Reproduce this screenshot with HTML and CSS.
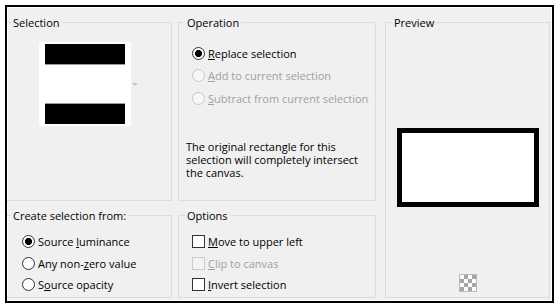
FILE: index.html
```html
<!DOCTYPE html>
<html>
<head>
<meta charset="utf-8">
<link rel="stylesheet" href="styles.css">
</head>
<body>
<div class="frame">
  <fieldset class="group left sel">
    <legend>Selection</legend>
    <div class="thumbwrap">
      <div class="thumb"><div class="bar bar-top"></div><div class="bar bar-bottom"></div></div>
      <span class="arrow"></span>
    </div>
  </fieldset>

  <fieldset class="group op">
    <legend>Operation</legend>
    <div class="list op-list">
      <div class="row"><span class="radio checked"></span><span><u>R</u>eplace selection</span></div>
      <div class="row disabled"><span class="radio"></span><span><u>A</u>dd to current selection</span></div>
      <div class="row disabled"><span class="radio"></span><span><u>S</u>ubtract from current selection</span></div>
    </div>
    <p class="note">The original rectangle for this<br>selection will completely intersect<br>the canvas.</p>
  </fieldset>

  <fieldset class="group preview">
    <legend>Preview</legend>
    <div class="preview-body">
      <div class="canvas-rect"></div>
      <div class="checker"></div>
    </div>
  </fieldset>

  <fieldset class="group left create">
    <legend>Create selection from:</legend>
    <div class="list small-list create-list">
      <div class="row"><span class="radio checked"></span><span>Source <u>l</u>uminance</span></div>
      <div class="row"><span class="radio"></span><span>Any non-<u>z</u>ero value</span></div>
      <div class="row"><span class="radio"></span><span>S<u>o</u>urce opacity</span></div>
    </div>
  </fieldset>

  <fieldset class="group options">
    <legend>Options</legend>
    <div class="list small-list opt-list">
      <div class="row"><span class="check"></span><span><u>M</u>ove to upper left</span></div>
      <div class="row disabled"><span class="check"></span><span><u>C</u>lip to canvas</span></div>
      <div class="row"><span class="check"></span><span><u>I</u>nvert selection</span></div>
    </div>
  </fieldset>
</div>
</body>
</html>
```

FILE: styles.css
```css
html, body {
  margin: 0;
  padding: 0;
  background: #ffffff;
}

body {
  font-family: "Open Sans", "Noto Sans", "Liberation Sans", sans-serif;
  font-size: 11px;
  color: #000;
}

.frame {
  margin: 5px;
  width: 545px;
  height: 294px;
  box-sizing: content-box;
  border: 2px solid #000;
  background: #f0f0f0;
  box-shadow: inset 0 0 0 1px #ffffff;
  display: grid;
  grid-template-columns: 165px 6px 198px 9px 165px;
  grid-template-rows: 186px 7px 90px;
  padding: 8px 2px 3px 0;
  box-sizing: border-box;
  width: 549px;
  height: 298px;
}

.group {
  margin: 0;
  padding: 0;
  min-width: 0;
  border: 1px solid #dcdcdc;
  box-sizing: border-box;
}

.group legend {
  margin-left: 6px;
  padding: 0 2px;
  line-height: 15px;
  height: 15px;
}

.group.left {
  border-left: none;
}

.group.left legend {
  margin-left: 4px;
}

.sel { grid-column: 1; grid-row: 1; }
.op { grid-column: 3; grid-row: 1; }
.preview { grid-column: 5; grid-row: 1 / 4; }
.create { grid-column: 1; grid-row: 3; }
.options { grid-column: 3; grid-row: 3; }

/* Selection thumbnail */
.thumbwrap {
  display: flex;
  align-items: center;
  gap: 1px;
  margin-top: 12px;
  padding-left: 32px;
}

.thumb {
  width: 92px;
  height: 84px;
  background: #ffffff;
  padding: 2px 6px;
  box-sizing: border-box;
  display: flex;
  flex-direction: column;
  justify-content: space-between;
}

.bar {
  height: 20px;
  background: #000;
}

.bar-top { box-shadow: 0 1px 0 #9a9a9a; }
.bar-bottom { box-shadow: 0 -1px 0 #9a9a9a; }

.arrow {
  width: 0;
  height: 0;
  border-left: 3px solid transparent;
  border-right: 3px solid transparent;
  border-top: 3px solid #c4c4c4;
}

/* Lists of radios / checkboxes */
.list {
  display: flex;
  flex-direction: column;
}

.op-list {
  padding: 12px 0 0 13px;
}

.op-list .row {
  height: 22.5px;
}

.small-list {
  padding-top: 8px;
}

.small-list .row {
  height: 21.5px;
}

.create-list {
  padding-left: 15px;
}

.opt-list {
  padding-left: 13px;
}

.row {
  display: flex;
  align-items: center;
  gap: 3px;
  white-space: nowrap;
}

.row u {
  text-decoration: underline;
  text-underline-offset: 1px;
}

.row.disabled {
  color: #a0a0a0;
}

.radio {
  width: 13px;
  height: 13px;
  box-sizing: border-box;
  border: 1px solid #333333;
  border-radius: 50%;
  background: #ffffff;
  flex: none;
}

.radio.checked {
  background: radial-gradient(circle, #000 0 3.2px, #ffffff 3.9px);
}

.row.disabled .radio {
  border-color: #c6c6c6;
  background: #f7f7f7;
}

.check {
  width: 13px;
  height: 13px;
  box-sizing: border-box;
  border: 1px solid #333333;
  background: #ffffff;
  flex: none;
}

.row.disabled .check {
  border-color: #cccccc;
  background: #f3f3f3;
}

.note {
  margin: 30px 0 0 7px;
  line-height: 13px;
}

/* Preview */
.preview-body {
  display: flex;
  flex-direction: column;
  align-items: center;
}

.canvas-rect {
  margin-top: 98px;
  width: 142px;
  height: 79px;
  box-sizing: border-box;
  border: 5px solid #000;
  background: #ffffff;
}

.checker {
  margin-top: 67px;
  width: 18px;
  height: 18px;
  box-sizing: border-box;
  border: 1px solid #b8b8b8;
  background: repeating-conic-gradient(#a6a6a6 0 25%, #ffffff 0 50%) 0 0 / 8px 8px;
}
```
